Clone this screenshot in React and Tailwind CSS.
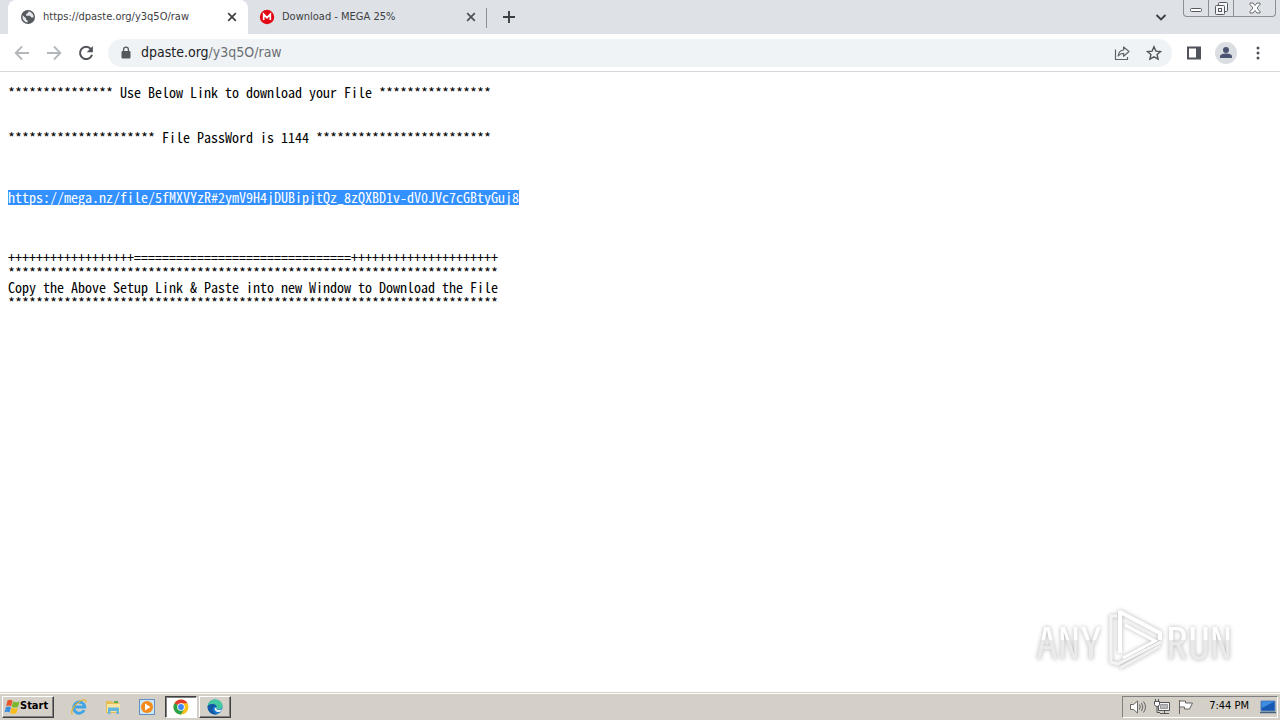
import React, { useState } from "react";

const PASTE_URL =
  "https://mega.nz/file/5fMXVYzR#2ymV9H4jDUBipjtQz_8zQXBD1v-dV0JVc7cGBtyGuj8";

const stars = (count) => "*".repeat(count);

const GlobeIcon = () => (
  <svg className="w-4 h-4 shrink-0" viewBox="0 0 16 16">
    <circle cx="8" cy="8" r="7" fill="#55595e" />
    <path
      d="M2.6 6.2 6 9.2v1.2l1.6 1.2v1.8C4.6 13.2 2.5 10.9 2.5 8zM8.4 2.6c-.6 1-.2 1.8-1.6 2.2-1 .3-.9 1.4-.5 2h3.200c1 0 1.200 1.700 2.200 1.700h1.900c.2-3-2.200-5.700-5.200-5.900z"
      fill="#e4e6e9"
    />
  </svg>
);

const MegaIcon = () => (
  <svg className="w-4 h-4 shrink-0" viewBox="0 0 16 16">
    <circle cx="8" cy="8" r="7.2" fill="#e30613" />
    <path d="M4.7 11V5.4L8 8.7l3.300-3.300V11" fill="none" stroke="#fff" strokeWidth="1.7" />
  </svg>
);

const CloseIcon = ({ color }) => (
  <svg className="w-2.5 h-2.5" viewBox="0 0 10 10">
    <path d="M1.2 1.2 8.8 8.8M8.8 1.2 1.2 8.8" stroke={color} strokeWidth="1.7" />
  </svg>
);

const ArrowIcon = ({ flip }) => (
  <svg className={flip ? "w-4 h-4 rotate-180" : "w-4 h-4"} viewBox="0 0 16 16">
    <path d="M15 8H2M8 1.5 1.7 8 8 14.5" fill="none" stroke="#b4b7ba" strokeWidth="1.8" />
  </svg>
);

const ReloadIcon = () => (
  <svg className="w-4 h-4" viewBox="0 0 16 16">
    <path d="M12.8 4A6.1 6.1 0 1 0 14 9.7" fill="none" stroke="#50545a" strokeWidth="2" />
    <path d="M14.9 1v6.200H8.700z" fill="#50545a" />
  </svg>
);

const LockIcon = () => (
  <svg className="w-3 h-3.5 shrink-0" viewBox="0 0 12 14">
    <rect x="1.5" y="5" width="9" height="7.5" rx="1" fill="#55595e" />
    <path d="M3.6 5.5V3.5a2.4 2.4 0 0 1 4.8 0v2" fill="none" stroke="#55595e" strokeWidth="1.3" />
  </svg>
);

const ShareIcon = () => (
  <svg className="w-4 h-4" viewBox="0 0 16 16" fill="none" stroke="#5f6368" strokeWidth="1.2">
    <path d="M1.5 4.5v10h12V12" />
    <path d="M9.6 2v3C6.3 5.2 4.6 7.5 4.2 11c1.5-2 3-2.7 5.400-2.700v3L15 6.500z" strokeLinejoin="round" />
  </svg>
);

const StarIcon = () => (
  <svg className="w-4 h-4" viewBox="0 0 16 16">
    <path
      d="m8 1.8 1.9 4.3 4.7.4-3.5 3.1 1 4.6L8 11.8l-4.1 2.4 1-4.6-3.5-3.1 4.7-.4z"
      fill="none"
      stroke="#50545a"
      strokeWidth="1.4"
    />
  </svg>
);

const SidePanelIcon = () => (
  <svg className="w-4 h-4" viewBox="0 0 16 16">
    <path d="M1 1.5h14v13H1zM3 3.5v9h7v-9z" fill="#50545a" fillRule="evenodd" />
  </svg>
);

const Tab = ({ title, icon, active }) => (
  <div
    className={
      active
        ? "flex items-center w-60 h-full pl-3 pr-[11px] rounded-t-lg bg-white"
        : "flex items-center w-60 h-full pl-[11px] pr-3"
    }
  >
    {icon}
    <span className="ml-[7px] flex-1 whitespace-nowrap text-[11px] text-[#3c4043]">{title}</span>
    <button aria-label={`Close ${title}`}>
      <CloseIcon color={active ? "#3c4043" : "#4d5156"} />
    </button>
  </div>
);

const WindowControls = () => (
  <div className="flex h-[17px] w-[93px] mr-1 border border-t-0 border-[#8b8f96] rounded-b text-[#6b6f76]">
    <button className="flex-1 flex items-end justify-center pb-1" aria-label="Minimize">
      <svg className="w-3 h-1" viewBox="0 0 12 4">
        <rect x=".5" y=".5" width="11" height="3" rx="1" fill="#fff" stroke="#55595e" />
      </svg>
    </button>
    <button
      className="flex-1 flex items-center justify-center border-x border-[#8b8f96]"
      aria-label="Restore"
    >
      <svg className="w-[13px] h-[13px]" viewBox="0 0 13 13" fill="#f4f5f7" stroke="#55595e">
        <rect x="3.5" y=".5" width="9" height="9" rx="1" />
        <rect x=".5" y="3.5" width="9" height="9" rx="1" />
        <rect x="3.5" y="6.5" width="3" height="3" />
      </svg>
    </button>
    <button className="w-[41px] flex items-center justify-center" aria-label="Close window">
      <svg className="w-3 h-3" viewBox="0 0 12 12">
        <path
          d="M1 1h3l2 2.500L8 1h3v1.500L8 6l3 3.500V11H8L6 8.500 4 11H1V9.500L4 6 1 2.500z"
          fill="#fff"
          stroke="#55595e"
          strokeWidth=".9"
        />
      </svg>
    </button>
  </div>
);

const TabStrip = () => (
  <div className="flex h-[34px] bg-[#dee1e6] pl-2">
    <Tab active title="https://dpaste.org/y3q5O/raw" icon={<GlobeIcon />} />
    <Tab title="Download - MEGA 25%" icon={<MegaIcon />} />
    <div className="w-px h-5 mt-2 -ml-0.5 bg-[#8b8f96]" />
    <button className="ml-[15px] self-center" aria-label="New tab">
      <svg className="w-3.5 h-3.5" viewBox="0 0 14 14">
        <path d="M7 1v12M1 7h12" stroke="#3c4043" strokeWidth="1.9" />
      </svg>
    </button>
    <div className="flex-1" />
    <button className="mr-4 self-center" aria-label="Search tabs">
      <svg className="w-3 h-3" viewBox="0 0 12 12">
        <path d="m1.5 4 4.5 4.5L10.5 4" fill="none" stroke="#3c4043" strokeWidth="1.9" />
      </svg>
    </button>
    <WindowControls />
  </div>
);

const Toolbar = () => {
  const [address] = useState({ host: "dpaste.org", path: "/y3q5O/raw" });

  return (
    <div className="flex items-center h-[38px] bg-white border-b border-[#d5d7da] px-3.5">
      <button aria-label="Back">
        <ArrowIcon />
      </button>
      <button className="ml-4" aria-label="Forward">
        <ArrowIcon flip />
      </button>
      <button className="ml-4" aria-label="Reload">
        <ReloadIcon />
      </button>
      <div className="flex items-center flex-1 h-7 ml-3.5 pl-3 pr-2.5 rounded-full bg-[#f0f3f5]">
        <LockIcon />
        <a
          href="#address"
          className="ml-[9px] flex-1 whitespace-nowrap text-[14px] text-[#6b6f74]"
        >
          <span className="text-[#202124]">{address.host}</span>
          {address.path}
        </a>
        <button aria-label="Share">
          <ShareIcon />
        </button>
        <button className="ml-4" aria-label="Bookmark">
          <StarIcon />
        </button>
      </div>
      <button className="ml-3.5" aria-label="Side panel">
        <SidePanelIcon />
      </button>
      <button className="ml-[13px] w-[22px] h-[22px] rounded-full bg-[#dadde2]" aria-label="Profile">
        <svg viewBox="0 0 22 22">
          <circle cx="11" cy="8" r="3" fill="#4a5470" />
          <path d="M5 16v-1.500c0-2.200 3.500-3 6-3s6 .8 6 3V16z" fill="#4a5470" />
        </svg>
      </button>
      <button className="ml-[13px]" aria-label="Menu">
        <svg className="w-4 h-4" viewBox="0 0 16 16" fill="#50545a">
          <circle cx="8" cy="3" r="1.5" />
          <circle cx="8" cy="8" r="1.5" />
          <circle cx="8" cy="13" r="1.5" />
        </svg>
      </button>
    </div>
  );
};

const Watermark = () => (
  <div className="absolute right-12 bottom-[21px] flex items-center gap-[3px] font-['Noto_Sans_Mono_CJK_SC',monospace] text-[44px] leading-[60px] drop-shadow-[0_0_2px_rgba(0,0,0,0.3)]">
    <span className="bg-linear-to-b from-white from-50% to-[#eaeaea] to-50% bg-clip-text text-transparent">
      ANY
    </span>
    <svg className="w-[58px] h-[63px]" viewBox="0 0 58 63" fill="none" stroke="#fff" strokeWidth="4">
      <path d="M12 8H6v46l7 2 43-22" strokeWidth="3" stroke="#f4f4f4" />
      <path d="M15 45V4l40 21v7" strokeLinejoin="round" />
      <path d="m20 17 30 16-32 17" strokeWidth="3" />
      <path d="m15 60 40-22" strokeWidth="3" stroke="#f0f0f0" />
    </svg>
    <span className="bg-linear-to-b from-white from-50% to-[#eaeaea] to-50% bg-clip-text text-transparent">
      RUN
    </span>
  </div>
);

const PasteContent = () => (
  <main className="relative flex-1 bg-white px-2 pt-[13px]">
    <pre className="font-['Noto_Sans_Mono_CJK_SC','DejaVu_Sans_Mono',monospace] text-[14px] leading-[15px] text-black">
      {`${stars(15)} Use Below Link to download your File ${stars(16)}\n\n\n`}
      {`${stars(21)} File PassWord is 1144 ${stars(25)}\n\n\n\n`}
      <span className="inline-block bg-[#3390ff] text-white">{PASTE_URL}</span>
      {`\n\n\n\n${"+".repeat(18)}${"=".repeat(31)}${"+".repeat(21)}\n`}
      {`${stars(70)}\n`}
      {"Copy the Above Setup Link & Paste into new Window to Download the File\n"}
      {stars(70)}
    </pre>
    <Watermark />
  </main>
);

const WindowsLogo = () => (
  <svg className="w-4 h-4" viewBox="0 0 16 16">
    <path d="M3.500 1.500c2-1 3.500-.8 5 .3L7.200 7.300c-1.500-1-3-1.200-5-.3z" fill="#e8552b" />
    <path d="M9.200 2.200c2 1.200 4 1.200 6.300.3L14 8c-2 .9-4 .8-6.300-.3z" fill="#7cb82f" />
    <path d="M2 8c2-1 3.600-.7 5 .2L5.600 13.500c-1.500-1-3-1.200-5-.3z" fill="#3e8ede" />
    <path d="M7.600 8.600c2 1.200 4 1.200 6.200.3l-1.400 5.300c-2 .9-4 .8-6.200-.3z" fill="#f9bd1b" />
  </svg>
);

const IeIcon = () => (
  <svg className="w-[18px] h-[18px]" viewBox="0 0 18 18" fill="none">
    <path d="M14.200 12.200a5.600 5.600 0 1 1 .6-3.200H5" stroke="#3ea4e6" strokeWidth="2.8" />
    <path d="M2.5 16C-.5 13.500 6 4.500 11.5 2.500c3-1.200 5-.7 4.500 2" stroke="#e5b12d" strokeWidth="1.2" />
  </svg>
);

const ExplorerIcon = () => (
  <svg className="w-[18px] h-[18px]" viewBox="0 0 18 18">
    <path d="M2 3h5l1 1.500h7V15H2z" fill="#e5bd55" />
    <path d="M3 6h13v8H3z" fill="#f8e6a0" />
    <path d="M4 9.500h11V16h-2.500v-3H6.500v3H4z" fill="#62b5df" />
    <path d="M10 4h4" stroke="#5cae4c" strokeWidth="2" />
  </svg>
);

const MediaIcon = () => (
  <svg className="w-[18px] h-[18px]" viewBox="0 0 18 18">
    <rect x="1.5" y="1.5" width="15" height="15" fill="#cfe4f5" stroke="#5d93c8" />
    <circle cx="9" cy="9" r="6" fill="#f28a1c" />
    <path d="M7 5.500v7L12.500 9z" fill="#fff" />
  </svg>
);

const ChromeIcon = () => (
  <svg className="w-4 h-4" viewBox="0 0 16 16">
    <circle cx="8" cy="8" r="7.5" fill="#fbc116" />
    <path d="M8 8 1.5 4.250A7.5 7.5 0 0 1 14.5 4.250H8z" fill="#e33b2e" />
    <path d="M8 8 1.5 4.250A7.5 7.5 0 0 0 8 15.500L11.250 9.900z" fill="#2ba24c" />
    <circle cx="8" cy="8" r="3.8" fill="#fff" />
    <circle cx="8" cy="8" r="2.9" fill="#4285f4" />
  </svg>
);

const EdgeIcon = () => (
  <svg className="w-4 h-4" viewBox="0 0 16 16">
    <circle cx="8" cy="8" r="7.5" fill="#1677cb" />
    <path d="M.7 7C1.5 2.8 4.5.5 8 .5c4.5 0 7.500 3.200 7.500 6.200 0 2.500-2 3.800-4.500 3.800-1.500 0-2-.6-1.500-1.500C10.500 6 4 3.500.7 7z" fill="#42c9a0" />
    <path d="M.7 7C4 3.500 10 5 9.700 8 8 6.500 5.500 8 5.800 10.500c.2 2.200 2 4 4.200 4.700C5 16.500.2 12.500.7 7z" fill="#1459a5" />
    <path d="M9.600 8.500c-1 1.500 0 2.500 2 2.500 1.400 0 2.500-.4 3.400-1-.3 1-.9 2-1.700 2.800-3 1-6.500-.8-5.500-4z" fill="#e9f2f5" />
  </svg>
);

const Tray = () => (
  <div className="flex items-center h-[22px] pl-1.5 border border-[#808080] border-r-white border-b-white">
    <svg className="w-[18px] h-4" viewBox="0 0 18 16" fill="none" stroke="#666">
      <path d="M1.5 5.500h3l4-3.500v12l-4-3.500h-3z" fill="#fff" />
      <path d="M10.5 5.500q1.500 2.500 0 5M12.500 4q2.700 4 0 8M14.500 2.500q4 5.500 0 11" />
    </svg>
    <svg className="ml-1.5 w-[18px] h-4" viewBox="0 0 18 16" fill="none" stroke="#555">
      <path d="M5.500 3.500h11v8h-11z" fill="#f4f4f4" />
      <path d="M7.500 5.500h7v4h-7z" fill="#b9b9b9" stroke="#999" />
      <path d="M7 14.500h9M11.500 11.500v3" />
      <path d="M1.500 2.500h5v3q-.5 2-2.500 2t-2.500-2z" fill="#fff" />
      <path d="M2.500 0v2.500M5.500 0v2.500M4 7.500v6h3" />
    </svg>
    <svg className="ml-1.5 w-[18px] h-4" viewBox="0 0 18 16" fill="#fff" stroke="#666">
      <path d="M2.5 1v14M2.500 2h6v2h7l-3 6h-5V8h-5" />
    </svg>
    <span className="ml-3.5 text-[11px] text-black whitespace-nowrap">7:44 PM</span>
    <svg className="ml-2.5 w-[18px] h-4" viewBox="0 0 18 16">
      <path d="M2 2h14v10H2z" fill="#1559b5" stroke="#5c86b8" />
      <path d="M2.5 2.500h13L3 9z" fill="#3e8de0" />
      <path d="M1 13.500h16" stroke="#45617f" strokeWidth="1.5" />
    </svg>
  </div>
);

const Taskbar = () => (
  <div className="flex items-center h-7 shrink-0 px-0.5 bg-[#d4d0c8] border-t border-[#d4d0c8] shadow-[inset_0_1px_0_#fff]">
    <button className="flex items-center h-[22px] w-[52px] pl-px border border-white border-r-[#404040] border-b-[#404040] shadow-[inset_-1px_-1px_0_#808080]">
      <WindowsLogo />
      <span className="text-[11px] font-bold text-black">Start</span>
    </button>
    <button className="ml-4" aria-label="Internet Explorer">
      <IeIcon />
    </button>
    <button className="ml-4" aria-label="Explorer">
      <ExplorerIcon />
    </button>
    <button className="ml-4" aria-label="Media Player">
      <MediaIcon />
    </button>
    <button
      className="ml-[9px] flex items-center justify-center w-8 h-[22px] bg-white border border-[#404040] border-r-white border-b-white shadow-[inset_1px_1px_0_#808080]"
      aria-label="Chrome"
    >
      <ChromeIcon />
    </button>
    <button
      className="ml-0.5 flex items-center justify-center w-8 h-[22px] border border-white border-r-[#404040] border-b-[#404040] shadow-[inset_-1px_-1px_0_#808080]"
      aria-label="Edge"
    >
      <EdgeIcon />
    </button>
    <div className="flex-1" />
    <Tray />
  </div>
);

const App = () => (
  <div className="h-screen flex flex-col bg-white font-['DejaVu_Sans_Condensed','Noto_Sans',sans-serif]">
    {/* Browser chrome */}
    <TabStrip />
    <Toolbar />

    {/* Page */}
    <PasteContent />

    {/* Taskbar */}
    <Taskbar />
  </div>
);

export default App;
